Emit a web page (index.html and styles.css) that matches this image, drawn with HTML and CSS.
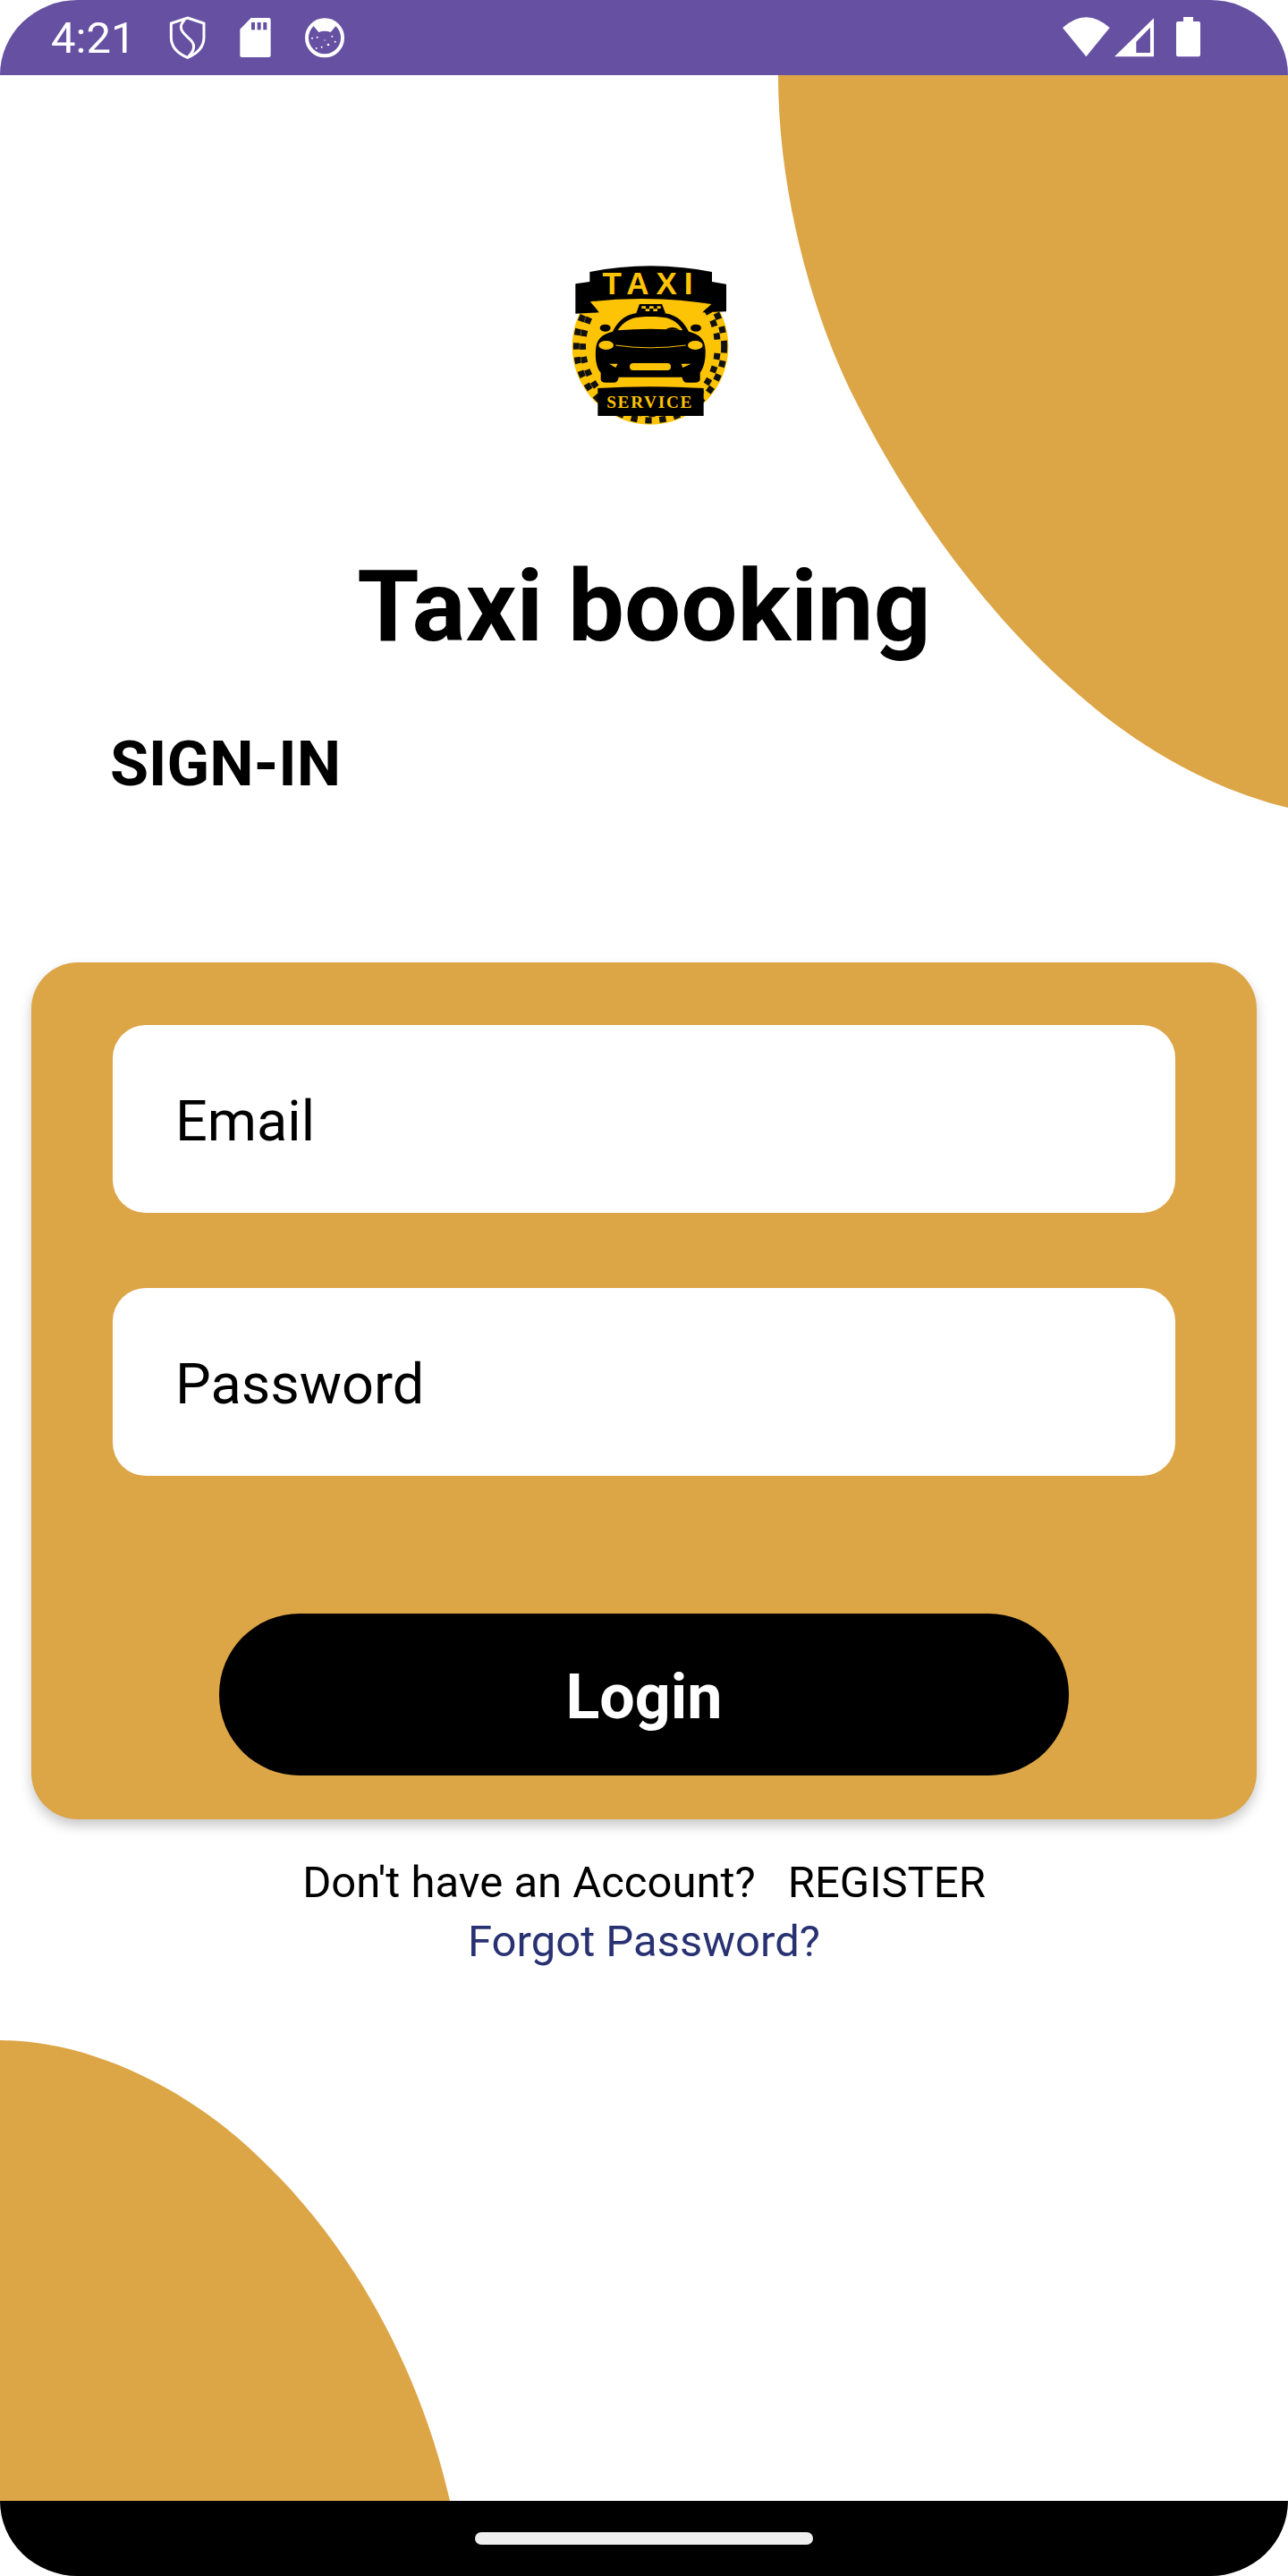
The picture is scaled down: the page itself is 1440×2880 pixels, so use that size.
FILE: index.html
```html
<!DOCTYPE html>
<html>
<head>
    <link rel="stylesheet" href="styles.css">
</head>
<body>
    <div class="screen">
        <svg class="blob blob-top" viewBox="860 84 580 830">
            <path d="M870 84 C870 210 905 345 955 445 C1025 585 1120 707 1223 791 C1290 846 1365 885 1440 903 V84 Z" fill="#dca546"/>
        </svg>
        <svg class="blob blob-bottom" viewBox="0 2280 510 516">
            <path d="M0 2281 C100 2281 215 2335 300 2422 C395 2515 470 2650 503 2796 H0 Z" fill="#dca546"/>
        </svg>

        <div class="status-bar">
            <div class="status-left">
                <span class="status-time">4:21</span>
                <svg class="icon-shield" viewBox="564 54 130 144">
                    <path d="M629 60 L684 78 V125 C684 158 660 180 629 193 C598 180 574 158 574 125 V78 Z" fill="none" stroke="#fff" stroke-width="9"/>
                    <path d="M620 66 C590 95 618 113 640 135 C656 151 652 170 632 190" fill="none" stroke="#fff" stroke-width="9"/>
                </svg>
                <svg class="icon-sd" viewBox="804 54 112 144">
                    <path d="M845 60 H905 Q911 60 911 66 V186 Q911 192 905 192 H814 Q808 192 808 186 V98 Z" fill="#fff"/>
                    <rect x="846" y="75" width="12" height="25" fill="#6650a2"/>
                    <rect x="866" y="75" width="12" height="25" fill="#6650a2"/>
                    <rect x="886" y="75" width="12" height="25" fill="#6650a2"/>
                </svg>
                <svg class="icon-cat" viewBox="1018 54 144 144">
                    <circle cx="1090" cy="127" r="60" fill="none" stroke="#fff" stroke-width="12"/>
                    <path d="M1050 84 L1070 108 Q1090 100 1110 108 L1130 84 Q1090 56 1050 84 Z" fill="#fff"/>
                    <circle cx="1048" cy="128" r="3" fill="#fff"/>
                    <circle cx="1065" cy="125" r="3" fill="#fff"/>
                    <circle cx="1102" cy="150" r="4" fill="#fff"/>
                    <circle cx="1125" cy="140" r="3" fill="#fff"/>
                    <circle cx="1080" cy="158" r="3" fill="#fff"/>
                    <circle cx="1062" cy="162" r="3" fill="#fff"/>
                    <circle cx="1115" cy="122" r="3" fill="#fff"/>
                    <circle cx="1090" cy="135" r="2" fill="#fff"/>
                </svg>
            </div>
            <div class="status-right">
                <svg class="icon-wifi" viewBox="145 54 158 144">
                    <path d="M145 93 Q224 22 303 93 L224 190 Z" fill="#fff"/>
                </svg>
                <svg class="icon-signal" viewBox="317 54 133 144">
                    <path fill-rule="evenodd" d="M450 60 V190 H317 Z M437 92 L390 140 V177 H437 Z" fill="#fff"/>
                </svg>
                <svg class="icon-battery" viewBox="525 54 81 144">
                    <path d="M549 57 H582 V72 H600 Q606 72 606 78 V184 Q606 190 600 190 H531 Q525 190 525 184 V78 Q525 72 531 72 H549 Z" fill="#fff"/>
                </svg>
            </div>
        </div>

        <div class="main">
            <svg class="logo" viewBox="0 0 600 600">
                <circle cx="321" cy="322" r="262" fill="#fdc305"/>
                <!-- checker ring -->
                <circle cx="321" cy="322" r="248" fill="none" stroke="#111" stroke-width="21" stroke-dasharray="22 26"/>
                <circle cx="321" cy="322" r="226" fill="none" stroke="#111" stroke-width="21" stroke-dasharray="21 24" stroke-dashoffset="22"/>
                <circle cx="321" cy="322" r="215" fill="#fdc305"/>
                <!-- banner -->
                <path d="M118 72 Q320 32 528 72 V105 L576 113 V205 L495 208 L526 180 Q320 134 120 172 L150 208 L70 212 V112 L118 105 Z" fill="#000"/>
                <path d="M120 172 Q320 134 526 180 L495 208 L150 208 Z" fill="#fdc305"/>
                <path d="M120 172 Q320 120 526 180 Q320 148 120 172 Z" fill="#000"/>
                <text class="logo-taxi" x="324" y="146" text-anchor="middle">TAXI</text>
                <!-- car -->
                <path d="M285 180 H360 L372 210 H274 Z" fill="#000"/>
                <path d="M292 187 h14 v8 h-14 z M318 187 h14 v8 h-14 z M344 187 h12 v8 h-12 z M305 196 h14 v8 h-14 z M331 196 h14 v8 h-14 z" fill="#fdc305"/>
                <ellipse cx="170" cy="260" rx="18" ry="12" fill="#000"/>
                <ellipse cx="474" cy="260" rx="18" ry="12" fill="#000"/>
                <path d="M195 272 C225 215 260 208 320 208 C385 208 420 215 450 272 C485 282 505 295 506 335 C507 370 500 395 488 410 V432 Q488 443 470 443 H445 Q430 443 428 425 H215 Q213 443 198 443 H172 Q155 443 155 432 V410 C142 395 136 370 138 335 C140 295 160 282 195 272 Z" fill="#000"/>
                <path d="M212 268 C240 225 275 222 320 222 C370 222 405 225 430 268 Q320 258 212 268 Z" fill="#fdc305"/>
                <path d="M370 266 Q395 250 420 266 Z" fill="#000"/>
                <ellipse cx="173" cy="318" rx="25" ry="15" fill="#fdc305"/>
                <ellipse cx="472" cy="318" rx="25" ry="15" fill="#fdc305"/>
                <path d="M205 318 Q320 335 440 318" fill="none" stroke="#fdc305" stroke-width="3"/>
                <rect x="252" y="378" width="138" height="24" rx="12" fill="#fdc305"/>
                <path d="M183 380 H212 L205 393 Z M430 393 L458 380 H425 Z" fill="#fdc305"/>
                <!-- service plate -->
                <path d="M145 462 Q320 452 500 462 V555 H145 Z" fill="#000"/>
                <text class="logo-service" x="320" y="528" text-anchor="middle">SERVICE</text>
            </svg>

            <h2 class="app-title">Taxi booking</h2>
            <h3 class="signin-title">SIGN-IN</h3>

            <form class="login-card">
                <input type="text" class="form-input" placeholder="Email">
                <input type="password" class="form-input" placeholder="Password">
                <button type="button" class="login-btn">Login</button>
            </form>

            <p class="link-row"><span>Don't have an Account?</span><span>REGISTER</span></p>
            <p class="link-row forgot">Forgot Password?</p>
        </div>

        <div class="nav-bar">
            <div class="nav-pill"></div>
        </div>
    </div>
</body>
</html>
```

FILE: styles.css
```css
* {
    box-sizing: border-box;
}

body {
    margin: 0;
    background: #fff;
    font-family: Roboto, sans-serif;
}

.screen {
    position: relative;
    width: 1440px;
    height: 2880px;
    overflow: hidden;
    display: flex;
    flex-direction: column;
}

/* corner shapes behind the content */
.blob {
    position: absolute;
}

.blob-top {
    left: 860px;
    top: 84px;
    width: 580px;
    height: 830px;
}

.blob-bottom {
    left: 0;
    top: 2280px;
    width: 510px;
    height: 516px;
}

.status-bar {
    position: relative;
    height: 84px;
    flex: none;
    display: flex;
    justify-content: space-between;
    align-items: center;
    padding: 0 98px 0 57px;
    background: #6650a2;
    border-radius: 87px 87px 0 0 / 84px 84px 0 0;
    color: #fff;
}

.status-left,
.status-right {
    display: flex;
    align-items: center;
}

.status-time {
    font-size: 49px;
    line-height: 58px;
    width: 131px;
    padding-top: 2px;
}

.status-bar svg {
    height: 48px;
    flex: none;
}

.icon-shield {
    width: 43.3px;
}

.icon-sd {
    width: 37.3px;
    margin-left: 36px;
}

.icon-cat {
    width: 48px;
    margin-left: 34px;
}

.icon-wifi {
    width: 52.7px;
}

.icon-signal {
    width: 44.3px;
    margin-left: 5px;
}

.icon-battery {
    width: 27px;
    margin-left: 25px;
}

.main {
    position: relative;
    flex: 1;
    display: flex;
    flex-direction: column;
}

.logo {
    width: 200px;
    height: 200px;
    margin: 196px auto 0;
    display: block;
}

.logo-taxi {
    font-family: "Liberation Sans", sans-serif;
    font-weight: 700;
    font-size: 105px;
    letter-spacing: 24px;
    fill: #fdc305;
}

.logo-service {
    font-family: "Liberation Serif", serif;
    font-weight: 700;
    font-size: 58px;
    letter-spacing: 5px;
    fill: #fdc305;
}

.app-title {
    margin: 132px 0 0;
    font-size: 112px;
    line-height: 132px;
    font-weight: 700;
    text-align: center;
    color: #000;
}

.signin-title {
    margin: 69px 0 0 123px;
    font-size: 70px;
    line-height: 82px;
    font-weight: 700;
    color: #000;
}

.login-card {
    height: 958px;
    margin: 181px 35px 0;
    padding: 70px 91px 49px;
    display: flex;
    flex-direction: column;
    background: #dca546;
    border-radius: 52px;
    box-shadow: 0 7px 14px rgba(0, 0, 0, 0.22);
}

.form-input {
    width: 100%;
    height: 210px;
    flex: none;
    padding: 4px 0 0 70px;
    margin-bottom: 84px;
    border: none;
    border-radius: 37px;
    background: #fff;
    font-family: Roboto, sans-serif;
    font-size: 63px;
    color: #000;
    outline: none;
}

.form-input::placeholder {
    color: #000;
    opacity: 1;
}

.login-btn {
    width: 950px;
    height: 181px;
    flex: none;
    margin: 70px auto 0;
    padding: 4px 0 0;
    border: none;
    border-radius: 90px;
    background: #000;
    color: #fff;
    font-family: Roboto, sans-serif;
    font-size: 70px;
    font-weight: 700;
}

.link-row {
    margin: 38px 0 0;
    display: flex;
    justify-content: center;
    gap: 36px;
    font-size: 49px;
    line-height: 66px;
    color: #000;
}

.forgot {
    margin-top: 0;
    color: #283272;
}

.nav-bar {
    position: relative;
    height: 84px;
    flex: none;
    display: flex;
    justify-content: center;
    padding-top: 35px;
    background: #000;
    border-radius: 0 0 87px 87px / 0 0 84px 84px;
}

.nav-pill {
    width: 378px;
    height: 14px;
    border-radius: 7px;
    background: #eee;
}
```
